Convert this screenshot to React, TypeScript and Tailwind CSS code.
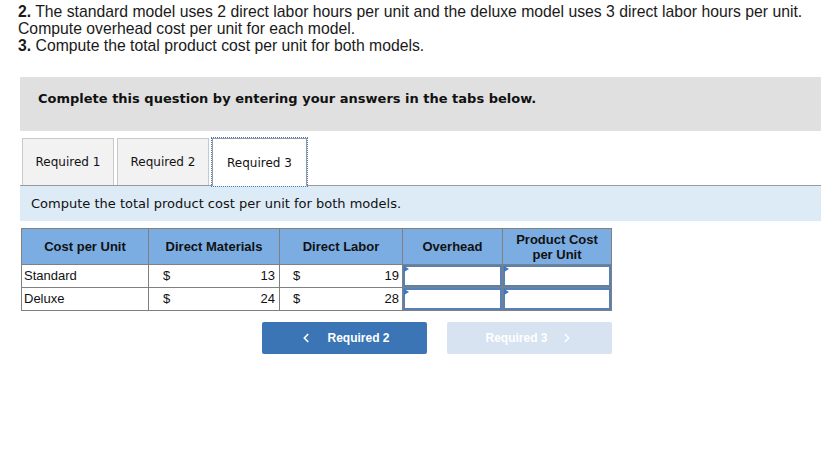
import React from "react";
import { ChevronLeft, ChevronRight } from "lucide-react";

const sans = "font-['Liberation_Sans',Arial,sans-serif]";
const verdana = "font-['DejaVu_Sans',Verdana,sans-serif]";

const rows = [
  { label: "Standard", materials: 13, labor: 19 },
  { label: "Deluxe", materials: 24, labor: 28 },
];

function Tab({ label, active = false }: { label: string; active?: boolean }) {
  return (
    <div
      className={
        active
          ? "relative z-10 -mb-[1px] flex h-[48px] w-[95px] items-center justify-center border border-b-0 border-[#9a9a9a] bg-white outline-1 outline-dotted outline-[#3d7cc9]"
          : "flex h-[47px] w-[92px] items-center justify-center border border-b-0 border-[#c9c9c9] bg-[#f2f2f2]"
      }
    >
      <span className={`${verdana} text-[12px] text-[#111]`}>{label}</span>
    </div>
  );
}

function AnswerCell() {
  return (
    <td className="h-[23px] border border-[#808080] p-0">
      <div className="relative h-[22px] border-2 border-[#5780b5] bg-white">
        <span className="absolute -left-[1px] -top-[1px] h-0 w-0 border-y-[3px] border-l-[5px] border-y-transparent border-l-[#3b78c2]" />
      </div>
    </td>
  );
}

export default function App() {
  return (
    <div className="min-h-[453px] w-[822px] bg-white">
      <div className={`${sans} px-[18px] pt-[3px] text-[15.75px] leading-[17px] text-[#1a1a1a]`}>
        <p className="whitespace-nowrap">
          <b>2.</b> The standard model uses 2 direct labor hours per unit and the deluxe model uses 3 direct labor hours per unit.
          <br />
          Compute overhead cost per unit for each model.
        </p>
        <p>
          <b>3.</b> Compute the total product cost per unit for both models.
        </p>
      </div>

      <div className="ml-[20px] mr-[1px] mt-[23px]">
        <div className="h-[54px] bg-[#e0e0e0] pl-[18px] pt-[14px]">
          <p className={`${verdana} text-[13px] font-bold leading-[16px] text-[#111]`}>
            Complete this question by entering your answers in the tabs below.
          </p>
        </div>

        <div className="ml-[2px] mt-[7px] flex items-start gap-[3px]">
          <Tab label="Required 1" />
          <Tab label="Required 2" />
          <Tab label="Required 3" active />
        </div>

        <div className="flex h-[36px] items-center border-t border-[#9a9a9a] bg-[#ddebf7] pl-[11px]">
          <p className={`${verdana} text-[13px] text-[#111]`}>
            Compute the total product cost per unit for both models.
          </p>
        </div>

        <table className={`${sans} ml-[1px] mt-[7px] border-collapse text-[13px] text-[#111]`}>
          <thead>
            <tr className="h-[36px] bg-[#7badE2]">
              <th className="w-[127px] border border-[#808080] font-bold">Cost per Unit</th>
              <th className="w-[131px] border border-[#808080] font-bold">Direct Materials</th>
              <th className="w-[123px] border border-[#808080] font-bold">Direct Labor</th>
              <th className="w-[100px] border border-[#808080] font-bold">Overhead</th>
              <th className="w-[109px] border border-[#808080] font-bold leading-[15px]">
                Product Cost
                <br />
                per Unit
              </th>
            </tr>
          </thead>
          <tbody>
            {rows.map((r) => (
              <tr key={r.label} className="h-[23px]">
                <td className="border border-[#808080] pl-[2px]">{r.label}</td>
                <td className="border border-[#808080] pl-[14px] pr-[4px]">
                  <div className="flex justify-between">
                    <span>$</span>
                    <span>{r.materials}</span>
                  </div>
                </td>
                <td className="border border-[#808080] pl-[13px] pr-[3px]">
                  <div className="flex justify-between">
                    <span>$</span>
                    <span>{r.labor}</span>
                  </div>
                </td>
                <AnswerCell />
                <AnswerCell />
              </tr>
            ))}
          </tbody>
        </table>

        <div className={`${sans} ml-[242px] mt-[11px] flex gap-[20px] text-[12px] font-bold text-white`}>
          <button className="flex h-[32px] w-[165px] items-center justify-center gap-[14px] rounded-[2px] bg-[#3b75b5]">
            <ChevronLeft className="h-[14px] w-[14px]" strokeWidth={3} />
            <span>Required 2</span>
          </button>
          <button className="flex h-[32px] w-[165px] items-center justify-center gap-[12px] rounded-[2px] bg-[#d7e3f1]">
            <span>Required 3</span>
            <ChevronRight className="h-[14px] w-[14px]" strokeWidth={2.5} />
          </button>
        </div>
      </div>
    </div>
  );
}
